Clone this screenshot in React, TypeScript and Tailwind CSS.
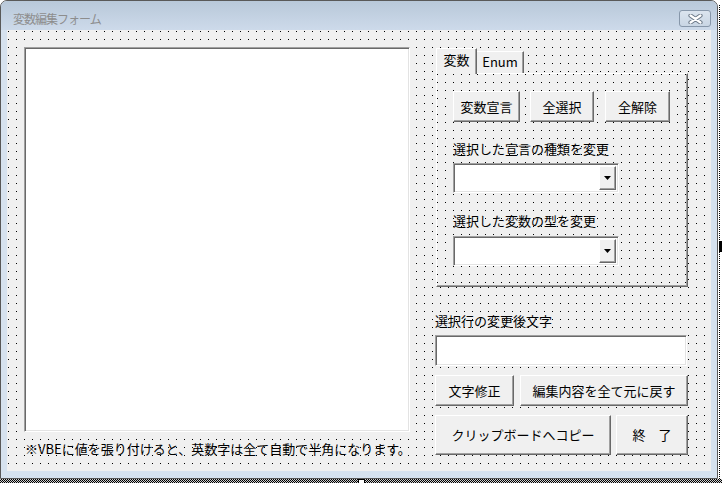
import React from "react";

const dots =
  "bg-[#f0f0f0] [background-image:conic-gradient(at_1px_1px,transparent_270deg,#000_270deg)] [background-size:8px_8px]";
const raised =
  "flex items-center justify-center border border-t-white border-l-white border-r-[#696969] border-b-[#696969] bg-[#f0f0f0] shadow-[inset_-1px_-1px_0_#a0a0a0]";
const sunken =
  "border border-t-[#a0a0a0] border-l-[#a0a0a0] border-r-white border-b-white bg-white shadow-[inset_1px_1px_0_#696969,inset_-1px_-1px_0_#e3e3e3]";

const Btn = ({ label, className }: { label: string; className: string }) => (
  <div className={`${raised} whitespace-nowrap text-[13px] leading-[16px] text-black ${className}`}>{label}</div>
);

const Combo = ({ className }: { className: string }) => (
  <div className={`${sunken} flex h-[30px] w-[166px] justify-end p-[2px] ${className}`}>
    <div className={`${raised} w-[17px]`}>
      <svg width="7" height="4" viewBox="0 0 7 4">
        <path d="M0 0h7L3.5 4z" fill="#000" />
      </svg>
    </div>
  </div>
);

const Label = ({ text, className }: { text: string; className: string }) => (
  <div className={`whitespace-nowrap text-[13px] leading-[16px] text-black ${className}`}>{text}</div>
);

export default function App() {
  return (
    <div className="flex h-[483px] w-[722px] flex-col overflow-hidden bg-white font-['Noto_Sans_CJK_JP',sans-serif]">
      <div className="flex h-[479px] shrink-0">
        {/* window */}
        <div className="flex h-[479px] w-[718px] flex-col overflow-hidden rounded-t-[7px] border border-[#595959] bg-[#d6e2ef]">
          <div className="flex h-[29px] shrink-0 items-start justify-between bg-[linear-gradient(#b8c8d9,#cddaea)] pr-[6px] pl-[12px]">
            <div className="mt-[10px] whitespace-nowrap text-[12px] leading-[15px] tracking-[-1px] text-[#8d8d8d]">変数編集フォーム</div>
            <div className="mt-[9px] flex h-[17px] w-[32px] items-center justify-center rounded-[3px] border border-[#8797aa] bg-[linear-gradient(#dbe4ee,#c9d6e4)]">
              <svg width="15" height="10" viewBox="0 0 15 10">
                <path d="M2.5 1.5l10 7M12.5 1.5l-10 7" stroke="#6b7887" strokeWidth="4.2" strokeLinecap="round" />
                <path d="M2.5 1.5l10 7M12.5 1.5l-10 7" stroke="#fff" strokeWidth="2.2" strokeLinecap="round" />
              </svg>
            </div>
          </div>
          <div className="flex h-[448px] shrink-0 px-[6px] pb-[7px]">
            {/* client */}
            <div className={`${dots} flex flex-1 gap-[25px] pt-[17px] pl-[17px] [background-position:1px_1px]`}>
              <div className="flex w-[386px] flex-col">
                <div className={`${sunken} h-[385px] shrink-0`} />
                <div className="mt-[9px] whitespace-nowrap pl-px text-[13px] leading-[16px] text-black">
                  ※VBEに値を張り付けると、英数字は全て自動で半角になります。
                </div>
              </div>
              <div className="flex w-[253px] flex-col">
                {/* multipage */}
                <div className="ml-px flex w-[252px] flex-col">
                  <div className="flex h-[26px] items-end">
                    <div className="relative z-10 -mb-px flex h-[26px] w-[41px] justify-center border-t border-l border-r border-t-white border-l-white border-r-[#696969] bg-[#f0f0f0] pt-[3px] text-[13px] leading-[16px] shadow-[inset_-1px_0_0_#a0a0a0]">
                      変数
                    </div>
                    <div className="flex h-[22px] w-[47px] justify-center border-t border-r border-t-white border-r-[#696969] bg-[#f0f0f0] pt-[2px] text-[13px] leading-[16px] shadow-[inset_-1px_0_0_#a0a0a0]">
                      Enum
                    </div>
                  </div>
                  <div className={`${dots} flex h-[214px] flex-col border border-t-white border-l-white border-r-[#696969] border-b-[#696969] pt-[17px] pl-[16px] shadow-[inset_-1px_-1px_0_#a0a0a0]`}>
                    <div className="flex">
                      <Btn label="変数宣言" className="h-[31px] w-[67px]" />
                      <Btn label="全選択" className="ml-[10px] h-[31px] w-[64px]" />
                      <Btn label="全解除" className="ml-[11px] h-[31px] w-[65px]" />
                    </div>
                    <Label text="選択した宣言の種類を変更" className="mt-[19px]" />
                    <Combo className="mt-[6px]" />
                    <Label text="選択した変数の型を変更" className="mt-[20px]" />
                    <Combo className="mt-[7px]" />
                  </div>
                </div>
                <Label text="選択行の変更後文字" className="mt-[26px]" />
                <div className={`${sunken} mt-[6px] h-[31px] w-[252px] shrink-0`} />
                <div className="mt-[9px] flex">
                  <Btn label="文字修正" className="h-[31px] w-[79px]" />
                  <Btn label="編集内容を全て元に戻す" className="ml-[6px] h-[31px] w-[168px]" />
                </div>
                <div className="mt-[9px] flex">
                  <Btn label="クリップボードへコピー" className="h-[40px] w-[176px]" />
                  <Btn label="終　了" className="ml-[5px] h-[40px] w-[72px]" />
                </div>
              </div>
            </div>
          </div>
        </div>
        {/* design-mode selection edge, right */}
        <div className="flex w-[4px] flex-col pt-[5px] pl-px">
          <div className="h-[236px] w-px bg-[repeating-linear-gradient(#000_0_1px,transparent_1px_2px)]" />
          <div className="h-[11px] w-[3px] bg-black" />
          <div className="w-px flex-1 bg-[repeating-linear-gradient(#000_0_1px,transparent_1px_2px)]" />
        </div>
      </div>
      {/* design-mode selection edge, bottom */}
      <div className="flex h-[4px]">
        <div className="flex-1 [background:repeating-conic-gradient(#000_0_25%,#d0d0d0_0_50%)_0_0/2px_2px]" />
        <div className="w-[7px] border-x border-t border-black bg-white" />
        <div className="flex-1 [background:repeating-conic-gradient(#000_0_25%,#d0d0d0_0_50%)_0_0/2px_2px]" />
      </div>
    </div>
  );
}
